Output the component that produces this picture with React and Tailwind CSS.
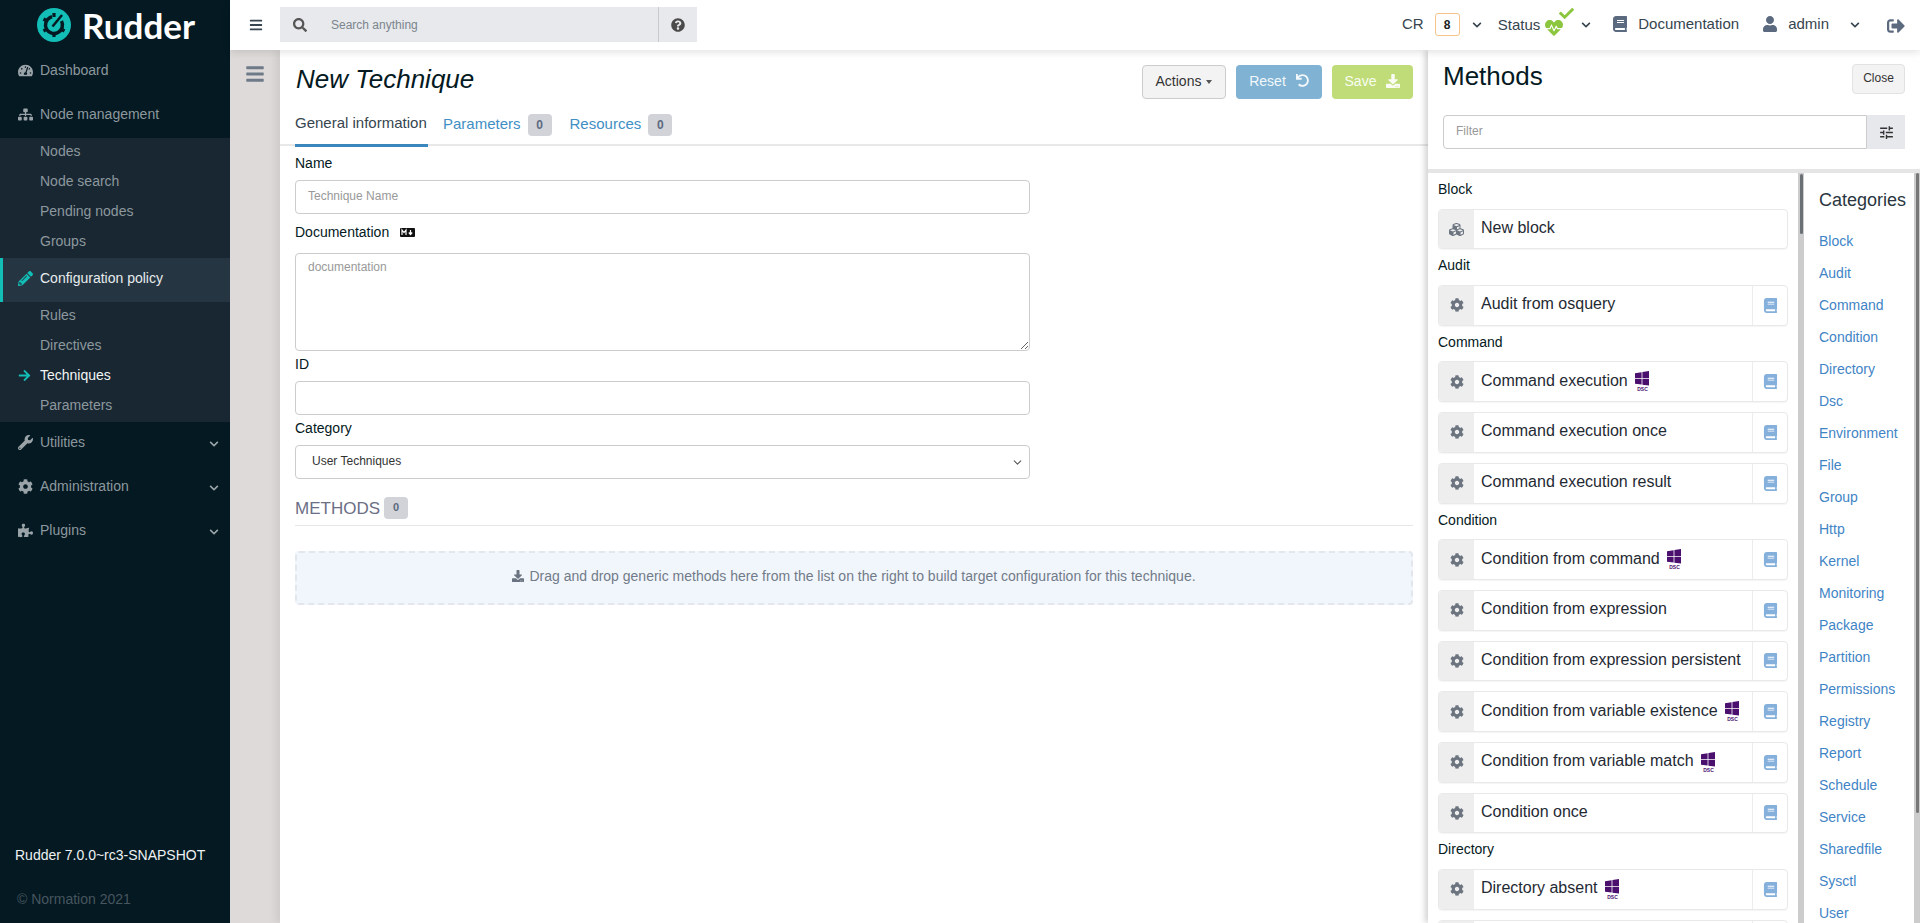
import React from 'react';
import {
  FaTachometerAlt, FaSitemap, FaPencilAlt, FaArrowRight, FaWrench, FaCog, FaPuzzlePiece,
  FaChevronDown, FaSearch, FaQuestionCircle, FaBook, FaUser, FaSignOutAlt, FaDownload,
  FaUndo, FaBars, FaCubes, FaHeartbeat, FaCheck,
} from 'react-icons/fa';
import { MdTune } from 'react-icons/md';
import { ChevronDown } from 'lucide-react';

const categories = ['Block', 'Audit', 'Command', 'Condition', 'Directory', 'Dsc', 'Environment', 'File', 'Group', 'Http', 'Kernel', 'Monitoring', 'Package', 'Partition', 'Permissions', 'Registry', 'Report', 'Schedule', 'Service', 'Sharedfile', 'Sysctl', 'User'];

const methodGroups = [
  { name: 'Block', items: [{ label: 'New block', block: true }] },
  { name: 'Audit', items: [{ label: 'Audit from osquery' }] },
  { name: 'Command', items: [{ label: 'Command execution', dsc: true }, { label: 'Command execution once' }, { label: 'Command execution result' }] },
  {
    name: 'Condition',
    items: [
      { label: 'Condition from command', dsc: true },
      { label: 'Condition from expression' },
      { label: 'Condition from expression persistent' },
      { label: 'Condition from variable existence', dsc: true },
      { label: 'Condition from variable match', dsc: true },
      { label: 'Condition once' },
    ],
  },
  // the second row only shows its top edge at the bottom of the window
  { name: 'Directory', items: [{ label: 'Directory absent', dsc: true }, { label: '' }] },
];

const Logo = () => (
  <svg width="34" height="34" viewBox="0 0 34 34">
    <circle cx="17" cy="17" r="17" fill="#13beb7" />
    <g fill="none" stroke="#041922">
      <circle cx="17" cy="17" r="8.5" strokeWidth="3.5" strokeDasharray="42 11.4" transform="rotate(-28 17 17)" />
      <path d="M17 5v4M6.5 11l3.5 2M6.5 23l3.5-2M17 29v-4M27.5 23l-3.5-2" strokeWidth="3.2" />
      <path d="M15.5 18.5L25 7" strokeWidth="2.5" />
    </g>
  </svg>
);

const DscIcon = () => (
  <svg width="15" height="21" viewBox="0 0 15 21" className="shrink-0">
    <path d="M0 2.2L6.6 1.2V7H0zM7.4 1.1L14 0V7H7.4zM0 7.8H6.6V13.6L0 12.7zM7.4 7.8H14V14.6L7.4 13.7z" fill="#4b0f6e" />
    <text x="7.5" y="20" textAnchor="middle" fontSize="5" fontWeight="700" fill="#4b0f6e" fontFamily="Liberation Sans">DSC</text>
  </svg>
);

const MainItem = ({ icon: Icon, label, arrow, active }) => (
  <div className={`h-[44px] flex items-center pb-1 pl-[15px] pr-[11px] text-sm border-l-[3px] ${active ? 'bg-[#253642] border-[#13beb7] text-[#e8ecee]' : 'border-transparent text-[#8d989e]'}`}>
    <span className={`w-[20px] flex justify-start ${active ? 'text-[#13beb7]' : 'text-[#9aa3a8]'}`}><Icon size={15} /></span>
    <span className="ml-[2px] flex-1">{label}</span>
    {arrow && <FaChevronDown size={10} className="mt-1 text-[#9aa3a8]" />}
  </div>
);

const SubMenu = ({ items, current }) => (
  <div className="bg-[#182732]">
    {items.map((item) => (
      <div key={item} className={`h-[30px] flex items-center pb-1 pl-[18px] text-sm ${item === current ? 'text-[#f2f4f5]' : 'text-[#8d989e]'}`}>
        <span className="w-[22px] text-[#13beb7]">{item === current && <FaArrowRight size={13} />}</span>
        {item}
      </div>
    ))}
  </div>
);

const Sidebar = () => (
  <aside className="w-[230px] shrink-0 h-full bg-[#041922] flex flex-col">
    <div className="h-[50px] flex items-center pl-[37px] gap-[11px]">
      <Logo />
      <span className="font-['Lato',sans-serif] font-bold text-[35px] leading-none text-white">Rudder</span>
    </div>
    <MainItem icon={FaTachometerAlt} label="Dashboard" />
    <MainItem icon={FaSitemap} label="Node management" />
    <SubMenu items={['Nodes', 'Node search', 'Pending nodes', 'Groups']} />
    <MainItem icon={FaPencilAlt} label="Configuration policy" active />
    <SubMenu items={['Rules', 'Directives', 'Techniques', 'Parameters']} current="Techniques" />
    <MainItem icon={FaWrench} label="Utilities" arrow />
    <MainItem icon={FaCog} label="Administration" arrow />
    <MainItem icon={FaPuzzlePiece} label="Plugins" arrow />
    <div className="mt-auto pl-[15px] pb-[14px]">
      <div className="text-sm leading-5 text-[#eef1f2]">Rudder 7.0.0~rc3-SNAPSHOT</div>
      <div className="mt-[24px] pl-[2px] text-sm leading-5 text-[#47555e]">© Normation 2021</div>
    </div>
  </aside>
);

const Chevron = () => <FaChevronDown size={10} className="text-[#36454f]" />;

const TopBar = () => (
  <header className="h-[50px] shrink-0 bg-white flex items-center relative z-30 shadow-[0_2px_8px_rgba(0,0,0,0.12)]">
    <div className="w-[50px] flex justify-center pl-[2px] text-[#36454f]"><FaBars size={14} /></div>
    <div className="w-[417px] h-[35px] bg-[#e7e9ec] flex items-center mb-[1px]">
      <FaSearch size={14} className="ml-[13px] text-[#555]" />
      <span className="ml-[24px] flex-1 text-xs text-[#7c858d]">Search anything</span>
      <div className="w-[39px] h-full border-l border-[#c8cacd] flex items-center justify-center text-[#4b4b4b]"><FaQuestionCircle size={14} /></div>
    </div>
    <div className="ml-auto flex items-center text-sm text-[#36454f]">
      <span className="text-[15px] mb-[2px]">CR</span>
      <span className="ml-[11px] mb-[1px] w-[25px] h-[23px] border border-[#f6c48b] rounded-[3px] flex items-center justify-center text-xs font-bold text-[#222]">8</span>
      <span className="ml-[12px] mr-[16px]"><Chevron /></span>
      <span className="text-[15px]">Status</span>
      <span className="relative w-[28px] ml-[5px] text-[#8cc63f]">
        <FaHeartbeat size={18} className="mt-[6px]" />
        <FaCheck size={15} className="absolute left-[14px] -top-[7px]" />
      </span>
      <span className="ml-[8px] mr-[21px]"><Chevron /></span>
      <FaBook size={16} className="text-[#5c6a80] mb-[2px]" />
      <span className="ml-[10px] text-[15px] mb-[2px]">Documentation</span>
      <FaUser size={16} className="ml-[23px] text-[#5c6a80] mb-[2px]" />
      <span className="ml-[10px] text-[15px] mb-[2px]">admin</span>
      <span className="ml-[21px] mr-[27px]"><Chevron /></span>
      <FaSignOutAlt size={18} className="mr-[15px] mt-[2px] text-[#5c6a80]" />
    </div>
  </header>
);

const CountBadge = ({ children }) => (
  <span className="ml-[7px] w-[24px] h-[22px] rounded-[4px] bg-[#d1d3d8] text-[#5c6a80] text-xs font-bold flex items-center justify-center">{children}</span>
);

const fieldClass = 'block w-[735px] h-[34px] rounded-[4px] border border-[#ccc] bg-white px-[12px] pb-[2px] text-xs text-[#333] placeholder:text-[#999] outline-none';

const Editor = () => (
  <main className="flex-1 min-w-0 bg-white relative z-10 shadow-[-4px_0_8px_rgba(0,0,0,0.08)]">
    <div className="h-[49px] mt-[15px] pl-[16px] pr-[15px] flex items-start justify-between">
      <h1 className="italic text-[26px] leading-[28px] text-[#041922]">New Technique</h1>
      <div className="flex gap-[10px] text-sm">
        <button className="w-[84px] h-[34px] pb-[3px] rounded-[4px] border border-[#ccc] bg-[#f3f3f3] text-[#333] flex items-center justify-center gap-[5px]">
          Actions <span className="mt-[2px] border-x-[3.5px] border-t-[4px] border-x-transparent border-t-[#555]" />
        </button>
        <button className="w-[86px] h-[34px] pb-[3px] rounded-[4px] bg-[#7fb2d3] text-white/90 flex items-center justify-center gap-[10px]">
          Reset <FaUndo size={13} />
        </button>
        <button className="w-[81px] h-[34px] pb-[3px] rounded-[4px] bg-[#bfdc78] text-white/90 flex items-center justify-center gap-[10px]">
          Save <FaDownload size={14} />
        </button>
      </div>
    </div>
    <div className="h-[30px] pl-[15px] border-b-2 border-[#e8e8e8] flex text-[15px] box-content">
      <div className="w-[133px] h-[30px] -mb-[2px] box-content border-b-[3px] border-[#3a87bd] text-[#36454f] leading-[17px]">General information</div>
      <div className="ml-[15px] flex items-start text-[#3f8fc4] leading-[19px]">Parameters<CountBadge>0</CountBadge></div>
      <div className="ml-[18px] flex items-start text-[#3f8fc4] leading-[19px]">Resources<CountBadge>0</CountBadge></div>
    </div>
    <div className="px-[15px] pt-[7px] text-sm text-[#041922]">
      <div className="h-[20px] mb-[7px] leading-5">Name</div>
      <input className={fieldClass} placeholder="Technique Name" />
      <div className="h-[20px] mt-[8px] mb-[11px] leading-5 flex items-center">
        Documentation
        <svg width="15" height="9" viewBox="0 0 15 9" className="ml-[11px]">
          <rect width="15" height="9" rx="1" fill="#111" />
          <path d="M2 7V2l2 2.5L6 2v5M10.5 2v4M8.8 4.5l1.7 2 1.7-2" stroke="#fff" strokeWidth="1.2" fill="none" />
        </svg>
      </div>
      <textarea className="block w-[735px] h-[98px] rounded-[4px] border border-[#ccc] px-[12px] py-[5px] text-xs placeholder:text-[#999] outline-none" placeholder="documentation" />
      <div className="h-[20px] mt-[3px] mb-[7px] leading-5">ID</div>
      <input className={fieldClass} />
      <div className="h-[20px] mt-[3px] mb-[7px] leading-5">Category</div>
      <div className="relative w-[735px]">
        <select className={`${fieldClass} appearance-none pl-[16px]`} defaultValue="User Techniques">
          <option>User Techniques</option>
        </select>
        <ChevronDown size={13} className="absolute right-[6px] top-[11px] text-[#555]" />
      </div>
      <div className="mt-[18px] h-[29px] border-b border-[#e7e7e7] flex items-start">
        <span className="text-[17px] leading-[24px] text-[#6b6f85]">METHODS</span>
        <span className="ml-[4px] w-[24px] h-[22px] rounded-[4px] bg-[#d1d3d8] text-[#5c6a80] text-[11px] font-bold flex items-center justify-center">0</span>
      </div>
      <div className="mt-[25px] h-[54px] pb-[4px] rounded-[4px] border-2 border-dashed border-[#e3e7ec] bg-[#f1f6fd] flex items-center justify-center gap-[5px] text-[#727b88]">
        <FaDownload size={12} className="text-[#6a7380]" />
        Drag and drop generic methods here from the list on the right to build target configuration for this technique.
      </div>
    </div>
  </main>
);

const MethodRow = ({ label, dsc, block }) => (
  <div className="h-[40.7px] mb-[10px] flex rounded-[4px] border border-[#e9e9e9] bg-white overflow-hidden shadow-[0_1px_1px_rgba(0,0,0,0.04)]">
    <div className="w-[35px] shrink-0 bg-[#eeeeee] flex items-center justify-center text-[#6c7480]">
      {block ? <FaCubes size={15} /> : <FaCog size={14} />}
    </div>
    <div className="flex-1 pl-[7px] flex items-center gap-[7px] text-base text-[#1f2a33]">
      <span className="mb-[2px]">{label}</span>
      {dsc && <DscIcon />}
    </div>
    {!block && (
      <div className="w-[35px] shrink-0 border-l border-[#ececec] flex items-center justify-center text-[#85b0dc]"><FaBook size={15} /></div>
    )}
  </div>
);

const Methods = () => (
  <section className="w-[492px] shrink-0 bg-white flex flex-col relative z-20 shadow-[-3px_0_6px_rgba(0,0,0,0.18)]">
    <div className="h-[119px] shrink-0 border-b-4 border-[#e5e5e5] box-content">
      <div className="h-[65px] pl-[15px] pr-[15px] flex items-start justify-between pt-[14px]">
        <h2 className="text-[26px] leading-[24px] text-[#041922]">Methods</h2>
        <button className="w-[53px] h-[30px] pb-[2px] rounded-[4px] border border-[#e2e2e2] bg-[#f3f3f3] text-xs text-[#333]">Close</button>
      </div>
      <div className="pl-[15px] pr-[15px] flex">
        <input className="flex-1 h-[34px] pb-[2px] rounded-l-[4px] border border-[#ccc] px-[12px] text-xs placeholder:text-[#999] outline-none" placeholder="Filter" />
        <div className="w-[38px] bg-[#e7e8ec] flex items-center justify-center text-[#333]"><MdTune size={17} /></div>
      </div>
    </div>
    <div className="flex-1 min-h-0 flex overflow-hidden">
      <div className="w-[370px] shrink-0 pl-[10px] pr-[10px] pt-[10px]">
        {methodGroups.map((group) => (
          <div key={group.name} className="-mt-[4px]">
            <div className="h-[29.7px] text-sm text-[#041922] leading-5">{group.name}</div>
            {group.items.map((item) => <MethodRow key={item.label} {...item} />)}
          </div>
        ))}
      </div>
      <div className="w-[6px] shrink-0 bg-[#ccc]"><div className="w-[3px] h-[60px] mt-[1px] mx-auto rounded bg-[#6b7075]" /></div>
      <div className="flex-1 pl-[15px] pt-[15px]">
        <div className="h-[30px] text-lg leading-6 text-[#2a3640]">Categories</div>
        <div className="mt-[7px]">
          {categories.map((name) => (
            <div key={name} className="h-[32px] flex items-center text-sm text-[#3f84c5]">{name}</div>
          ))}
        </div>
      </div>
      <div className="w-[6px] shrink-0 bg-[#ccc]"><div className="w-[3px] h-[640px] mx-auto rounded bg-[#777]" /></div>
    </div>
  </section>
);

export default function App() {
  return (
    <div className="h-screen w-full overflow-hidden flex font-['Liberation_Sans',Arial,sans-serif]">
      <Sidebar />
      <div className="flex-1 min-w-0 flex flex-col">
        <TopBar />
        <div className="flex-1 min-h-0 flex">
          <div className="w-[50px] shrink-0 bg-[#dedada] flex justify-center pt-[14px] text-[#6e7a88]"><FaBars size={20} /></div>
          <Editor />
          <Methods />
        </div>
      </div>
    </div>
  );
}
